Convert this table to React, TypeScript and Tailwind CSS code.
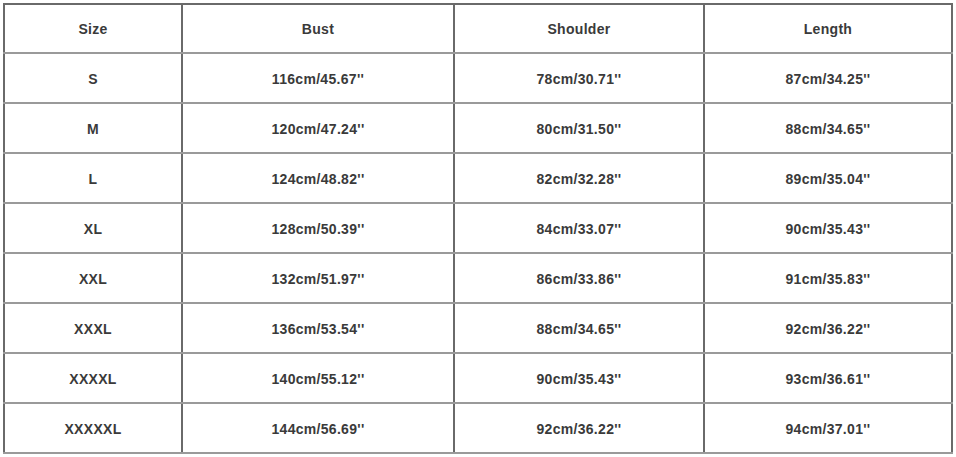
import React from "react";

const rows = [
  ["S", "116cm/45.67''", "78cm/30.71''", "87cm/34.25''"],
  ["M", "120cm/47.24''", "80cm/31.50''", "88cm/34.65''"],
  ["L", "124cm/48.82''", "82cm/32.28''", "89cm/35.04''"],
  ["XL", "128cm/50.39''", "84cm/33.07''", "90cm/35.43''"],
  ["XXL", "132cm/51.97''", "86cm/33.86''", "91cm/35.83''"],
  ["XXXL", "136cm/53.54''", "88cm/34.65''", "92cm/36.22''"],
  ["XXXXL", "140cm/55.12''", "90cm/35.43''", "93cm/36.61''"],
  ["XXXXXL", "144cm/56.69''", "92cm/36.22''", "94cm/37.01''"],
];

const cell =
  "border-x-2 border-x-[#6a6a6a] border-y-2 border-y-[#9a9a9a] text-center align-middle pt-[2px]";

const App: React.FC = () => {
  return (
    <div className="w-[956px] h-[457px] bg-white pt-[3px] pl-[3px] font-['Liberation_Sans',Arial,sans-serif]">
      <table className="table-fixed border-collapse w-[948px] text-[14px] tracking-[0.3px] font-bold text-[#3a3a3a]">
        <colgroup>
          <col className="w-[178px]" />
          <col className="w-[272px]" />
          <col className="w-[250px]" />
          <col className="w-[248px]" />
        </colgroup>
        <thead>
          <tr className="h-[49px]">
            <th className={`${cell} border-t-[#6a6a6a] font-bold`}>Size</th>
            <th className={`${cell} border-t-[#6a6a6a] font-bold`}>Bust</th>
            <th className={`${cell} border-t-[#6a6a6a] font-bold`}>Shoulder</th>
            <th className={`${cell} border-t-[#6a6a6a] font-bold`}>Length</th>
          </tr>
        </thead>
        <tbody>
          {rows.map((r) => (
            <tr key={r[0]} className="h-[50px]">
              {r.map((v, i) => (
                <td key={i} className={cell}>
                  {v}
                </td>
              ))}
            </tr>
          ))}
        </tbody>
      </table>
    </div>
  );
};

export default App;
